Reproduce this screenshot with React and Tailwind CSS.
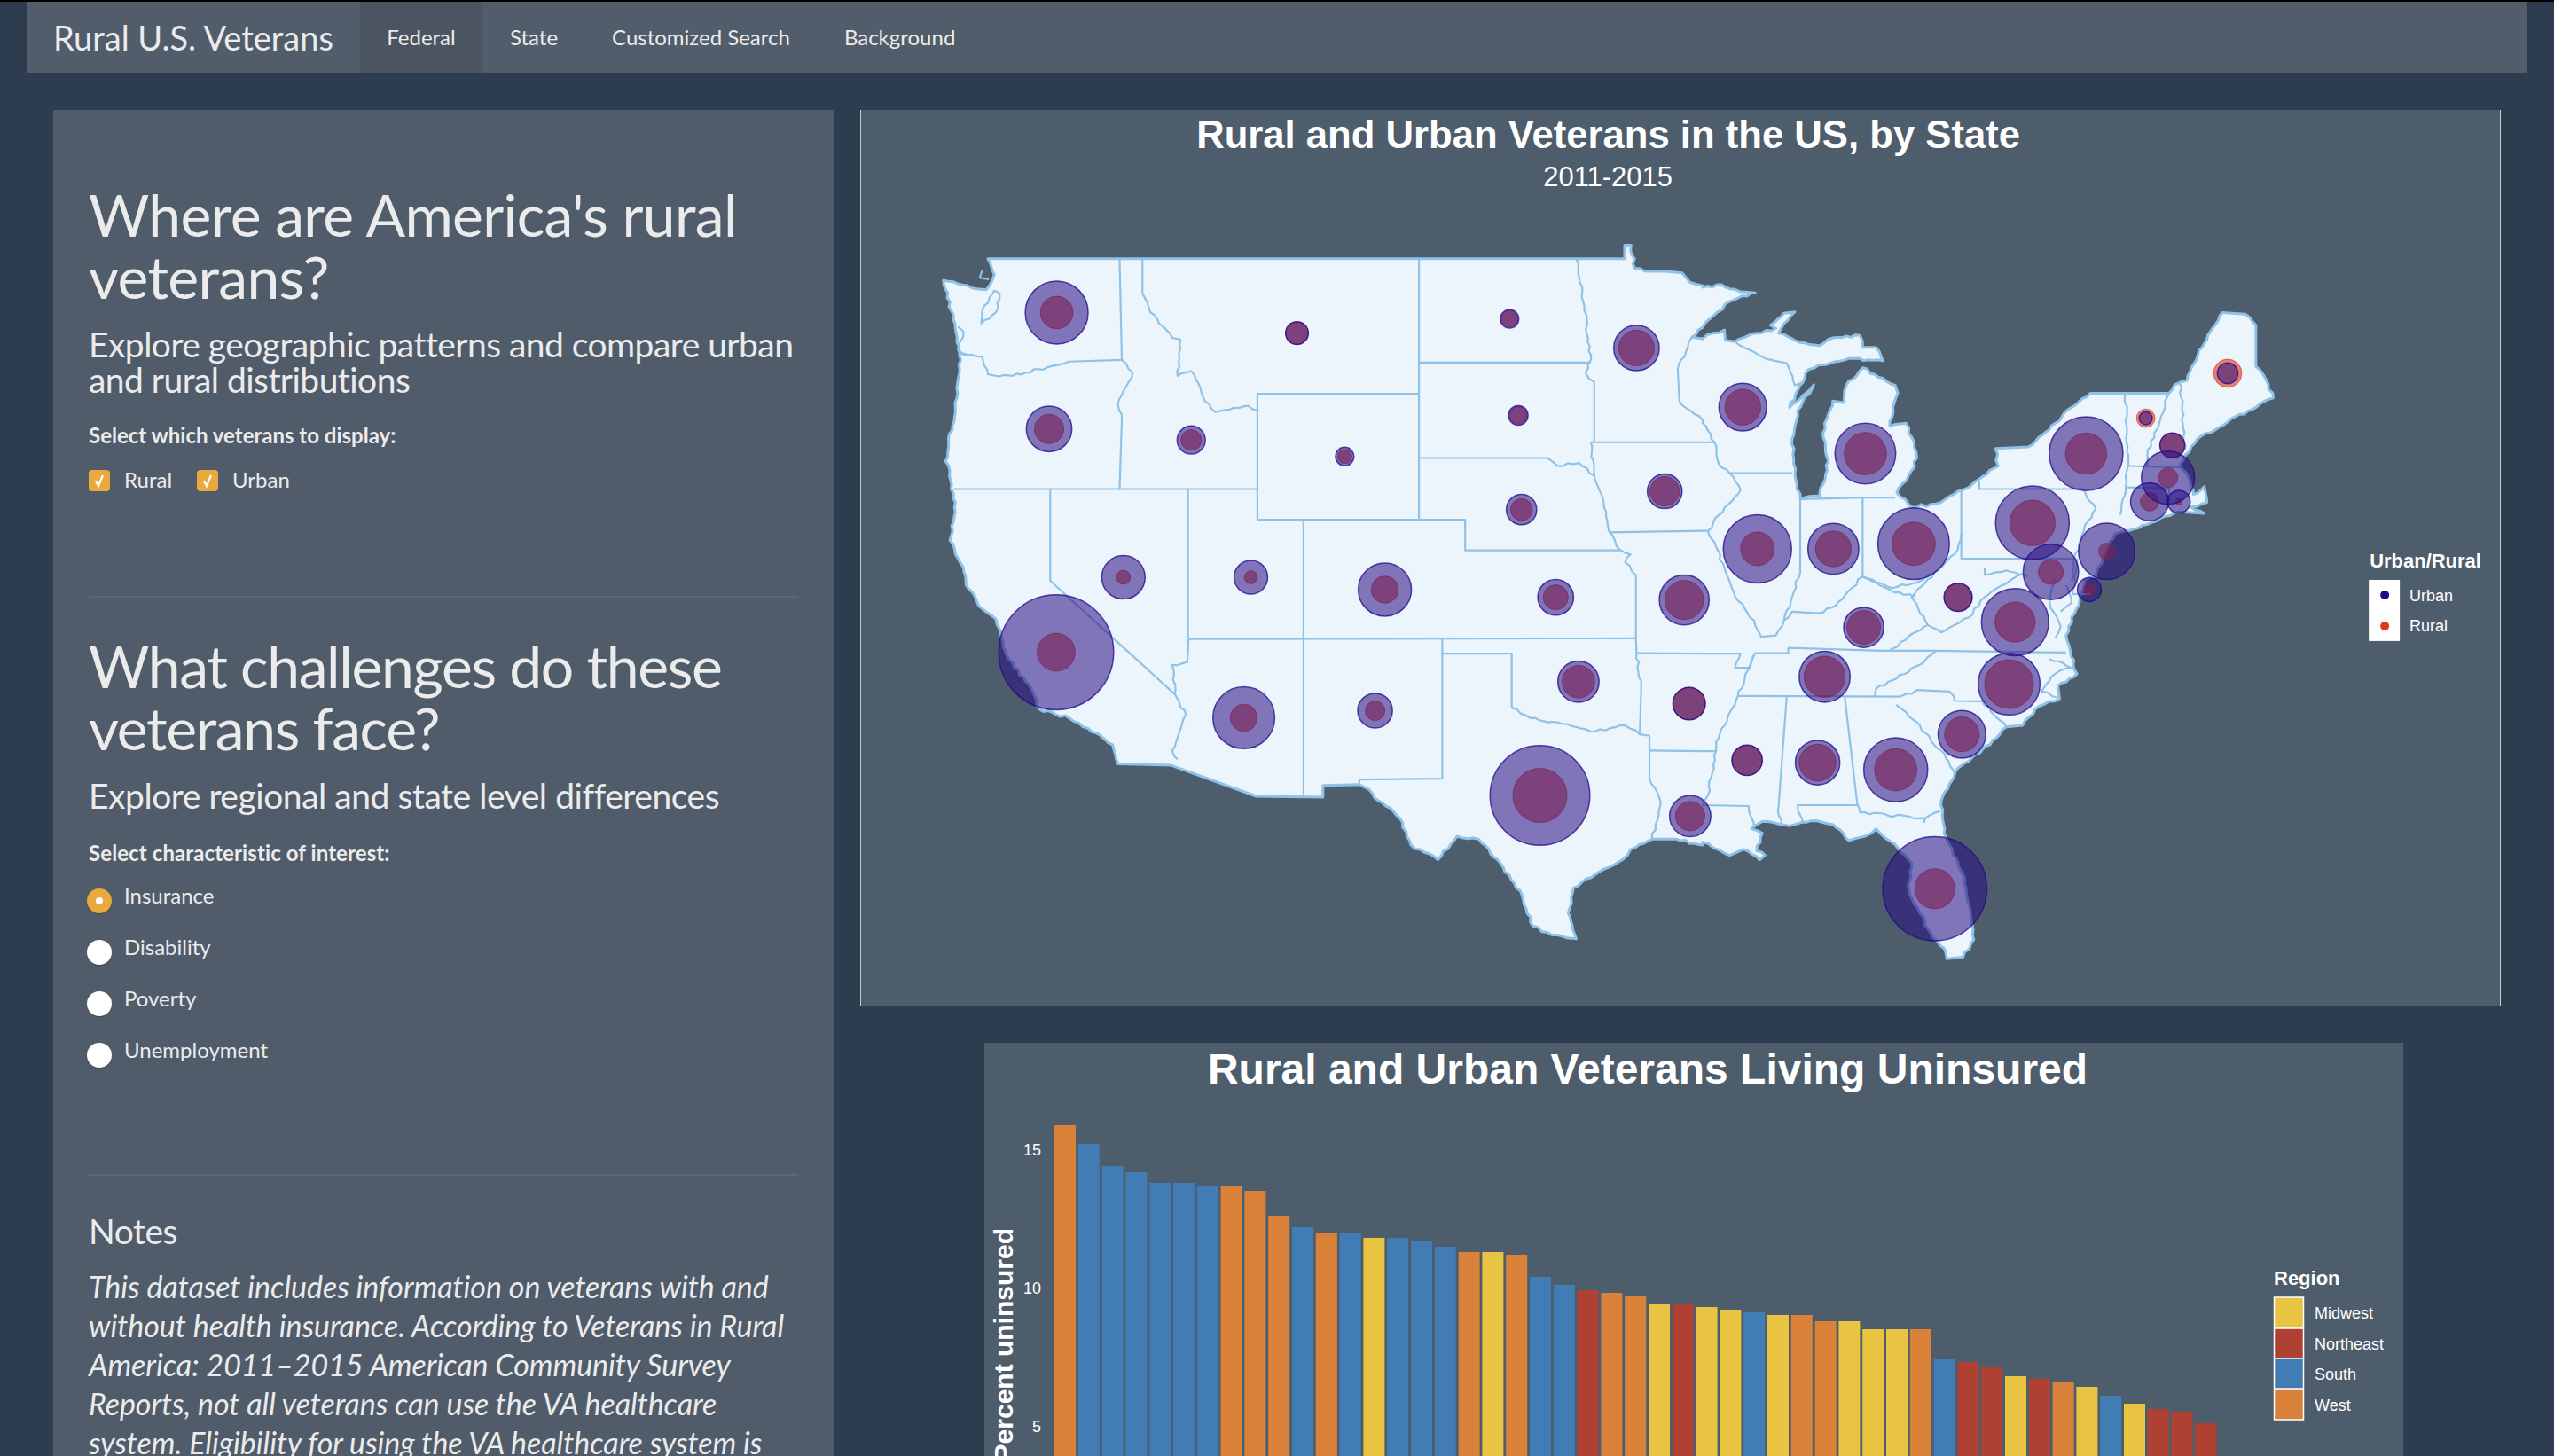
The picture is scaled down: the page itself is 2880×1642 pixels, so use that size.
const a=(...n)=>{const r=[];for(let i=0;i<n.length;i+=2)r.push([960+n[i]/1.6333,120+n[i+1]/2.8]);return r};
const b=(...n)=>{const r=[];for(let i=0;i<n.length;i+=2)r.push([1920+n[i]/1.6333,120+n[i+1]/2.8]);return r};
const c=(...n)=>{const r=[];for(let i=0;i<n.length;i+=2)r.push([960+n[i]/1.6333,640+n[i+1]/3]);return r};
const d=(...n)=>{const r=[];for(let i=0;i<n.length;i+=2)r.push([1920+n[i]/1.6333,640+n[i+1]/3]);return r};
const rnd=s=>{const v=Math.sin(s*12.9898)*43758.5453;return v-Math.floor(v)-.5};
// Roughens curved borders and coasts; keeps survey lines (axis-aligned or long straight ones) straight.
const P=(...segs)=>{
  const pts=segs.flat();const out=[pts[0]];let seed=pts[0][0]+pts[0][1];
  for(let i=1;i<pts.length;i++){
    const [x0,y0]=pts[i-1],[x1,y1]=pts[i];const dx=x1-x0,dy=y1-y0,len=Math.hypot(dx,dy);
    if(len>=8&&len<=90&&Math.abs(dx)>2.5&&Math.abs(dy)>2.5){
      const n=Math.floor(len/5);
      for(let k=1;k<n;k++){const t=k/n;seed+=1.37;const o=rnd(seed)*3.2;out.push([x0+dx*t-dy/len*o,y0+dy*t+dx/len*o])}
    }
    out.push(pts[i]);
  }
  return out.map((p,i)=>(i?'L':'M')+p[0].toFixed(1)+' '+p[1].toFixed(1)).join(' ');
};

const OUTLINE=P(
a(250,480,1424,480,1424,437,1436,437,1443,510,1480,520,1500,520,1530,525,1545,555,1568,565),
b(0,570,35,562,50,575,97,588,50,615,20,660,0,697),
a(1548,728,1568,733),
b(0,733,20,715,40,705,42,738,60,742,100,715,135,700,125,690,150,652,170,648,145,700,140,715,180,745,215,755,240,730,290,722,295,760,320,760,333,803,270,795,215,815,195,830,185,870,160,950,205,878,175,960,165,1050,170,1160,180,1240,215,1230,232,1120,222,1030,240,930,260,935,265,880,295,825,355,880,360,905,345,1010,375,1000,390,1060,395,1110,385,1150,358,1220,385,1265,430,1255,480,1210,545,1135,540,1080,600,1075,650,1000,680,950,715,905,860,905,870,878,893,865,915,770,958,650,1000,655,1020,690,1020,820,1035,850,1052,920,1020,950,975,985,950,1015,920,1040,890,1100,880,1130,895,1170,905,1225,925,1200,930,1250,900,1265,925,1285,880,1280,835,1310,770,1345,760,1350,745,1400,725,1485),
d(705,40,695,110,670,230,678,285,690,360,655,400,658,445,620,470,590,535,560,540,530,600,470,680,440,790,445,900,480,1040,500,1260,480,1320,450,1325,445,1290,425,1255,400,1170,380,1090,385,1000,360,950,320,885,300,910,270,925,240,870,200,858,160,875,145,870,110,860,90,885,110,900,100,960,115,975,105,990,75,955,50,975,20,950,0,930),
c(1568,940,1520,920,1475,920,1435,955,1420,990,1370,1040,1330,1085,1320,1170,1335,1258,1290,1245,1255,1215,1235,1110,1190,990,1155,920,1115,910,1080,990,1030,940,1010,850,945,745,935,735,868,738,868,778,745,775,588,670,490,665,480,600,435,545,400,510,345,480,330,410,285,300,265,175,240,140,210,60,205,0),
a(180,1370,190,1280,180,1150,172,1120,190,950,200,800,190,700,168,548,230,575,247,578,262,530,250,480)
)+' Z';

const LINES=[
P(a(240,515,235,540,252,545)),
P(a(262,580,240,640,238,685,265,650,272,590,262,580)),
P(a(195,695,205,710,195,770,215,785)),
P(a(493,480,497,800)),
P(a(200,780,240,790,250,845,270,852,320,840,400,805,497,800)),
P(a(497,800,517,840,490,940,497,990,493,1207)),
P(a(187,1208,747,1208)),
P(a(535,480,535,590,550,650,590,730,605,735,600,850,625,835,650,930,670,965,730,945,747,960)),
P(a(747,907,747,1305)),
P(a(747,907,1045,907)),
P(a(1045,480,1045,1305)),
P(a(1045,808,1362,808)),
P(a(1335,480,1350,630,1362,800,1352,840,1368,870,1368,1060)),
P(a(1045,1110,1282,1110,1300,1135,1340,1125,1368,1165,1390,1280,1395,1340,1415,1400,1435,1415,1425,1440,1445,1480),c(1445,30,1445,240)),
P(a(1362,1060,1368,1165)),
P(a(1362,1060,1568,1060),b(0,1060,22,1060)),
P(a(1395,1345,1568,1340),b(0,1340,10,1340)),
P(a(747,1305,1130,1305,1130,1402,1415,1402)),
P(a(832,1305),c(832,775)),
P(a(619,1208),c(619,240)),
P(c(620,242,1445,240)),
P(c(1088,242,1088,292,1216,292,1216,475,1250,510,1310,530,1370,555,1425,535,1452,565,1470,570,1470,715,1490,790,1475,920)),
P(c(1088,292,1088,715,935,718,935,735)),
P(c(1445,240,1446,290,1455,400,1452,565)),
P(c(1446,290,1568,292),d(0,292,70,292,60,340,85,340,97,290,158,290,158,272)),
P(c(1470,620,1568,622),d(0,622,25,622)),
P(a(365,1208),c(365,45,595,430,615,500,590,620,600,650)),
P(c(620,242,618,320,590,330,595,430)),
P(d(97,290,65,435,25,590,25,622,10,770,0,805,85,808,95,880)),
P(d(65,435,365,437)),
P(d(155,437,140,810,145,870)),
P(d(262,437,285,800,290,830,410,850,408,865)),
P(d(185,860,175,805,285,805)),
P(d(158,272,330,282,430,282,670,288)),
P(d(430,282,400,330,320,410,317,437)),
P(d(365,437,395,415,455,420,465,452,515,453,560,540)),
P(d(357,465,375,490,440,620,465,700)),
P(d(410,850,438,825)),
P(b(22,1060,30,1130,50,1158,70,1210,30,1290,10,1340,40,1456),d(60,100,95,180,108,235,135,230,150,180,165,150,215,155,245,130,275,70,295,30,345,75,390,100)),
P(d(345,280,415,195,385,100,415,40,440,0),b(470,1400,477,1350)),
P(b(477,1210,477,1428,690,1428)),
P(b(510,1185,510,1208,700,1208,725,1270,710,1310,685,1428,680,1500)),
P(b(780,905,785,1130,780,1200,770,1290)),
P(b(860,905,820,1100,820,1140)),
P(b(880,875,890,1085)),
P(b(785,1135,885,1140)),
P(b(780,1203,860,1205,860,1250)),
P(b(180,1240,295,1235,355,1235)),
P(b(295,1235,295,1486),d(320,50,350,70,395,50,420,20)),
P(b(180,1240,180,1420),d(180,0,165,100,150,180)),
P(b(50,1158,165,1158)),
P(a(1548,730,1522,830,1525,930,1568,990),b(0,1000,22,1060)),
P(b(60,742,110,790,155,810,170,880,185,870)),
P(d(415,195,440,220,490,170,520,100,570,40,590,20)),
P(d(520,0,520,25,560,10,600,30)),
P(b(690,1428,682,1540,715,1540)),
P(d(650,40,640,120,660,200,650,240)),
P(d(670,60,680,120,660,150)),
P(d(640,310,680,340,650,360,625,420,655,440)),
];

// [region, zx, zy, urban half-width, rural half-width] in crop units
const BUBBLES=[
[a,377,650,58,30],[a,363,1018,42,27],[a,625,1053,26,19],[a,820,715,21,21],[a,1212,670,17,15],[a,1228,975,18,16],[a,908,1105,17,13],[a,1446,762,42,33],[a,1498,1215,32,27],[a,1234,1273,28,20],[a,500,1487,40,13],[a,735,1487,31,12],
[c,982,75,49,25],[c,1297,101,33,23],[c,1534,110,46,36],[c,376,287,106,35],[c,722,509,57,25],[c,964,485,32,18],[c,1339,387,38,30],[c,1268,772,92,50],[c,1543,461,30,30],[c,1545,842,38,27],
[b,74,949,44,33],[b,300,1096,56,39],[b,101,1397,63,31],[b,241,1397,47,33],[b,389,1381,66,40],[b,608,1315,68,42],[b,707,1096,68,38],[b,817,984,12,17],[b,968,842,19,26],[b,866,1070,23,23],[b,858,1172,49,18],[b,824,1248,35,17],[b,878,1248,21,6],[b,745,1405,52,15],[b,642,1470,51,23],
[d,713,75,22,11],[d,576,185,62,37],[d,471,101,26,26],[d,297,203,37,31],[d,225,370,47,38],[d,565,395,57,45],[d,478,565,44,32],[d,356,685,59,39],[d,212,661,41,34],[d,82,653,28,28],[d,428,1088,96,37],
].map(([f,x,y,u,r])=>{const [p]=f(x,y);return {x:p[0],y:p[1],u:u/1.6333,r:r/1.6333}});

const O='#da8239',B='#417db4',Y='#e9c443',R='#ae4132';
const BARS=[[327,O],[390,B],[465,B],[486,B],[522,B],[522,B],[531,B],[531,O],[549,O],[633,O],[672,B],[690,O],[690,B],[708,Y],[708,B],[717,B],[738,B],[756,O],[756,Y],[765,O],[840,B],[867,B],[885,R],[894,O],[906,O],[933,Y],[933,R],[942,Y],[951,Y],[960,B],[969,Y],[969,O],[990,O],[990,Y],[1017,Y],[1017,Y],[1017,O],[1119,B],[1128,R],[1146,R],[1176,Y],[1185,R],[1194,O],[1212,Y],[1242,B],[1269,Y],[1287,R],[1296,R],[1335,R]];
const LEG=[['Midwest',Y,1463],['Northeast',R,1498],['South',B,1532],['West',O,1567]];

function MapPanel(){
  return (
    <div className="h-[1010px] bg-[#4e5d6c] border-x border-[#c3cbd2]">
      <svg viewBox="970 124 1850 1010" className="block w-full h-full font-['Liberation_Sans',Arial,sans-serif]">
        <text x="1813.5" y="167" textAnchor="middle" fill="#fff" fontSize="43.7" fontWeight="700">Rural and Urban Veterans in the US, by State</text>
        <text x="1813" y="210" textAnchor="middle" fill="#fff" fontSize="31">2011-2015</text>
        <path d={OUTLINE} fill="#edf5fc" stroke="#8fc2e6" strokeWidth="3" strokeLinejoin="round"/>
        {LINES.map((l,i)=><path key={i} d={l} fill="none" stroke="#8fc2e6" strokeWidth="2.2" strokeLinejoin="round"/>)}
        {BUBBLES.map((o,i)=><circle key={i} cx={o.x} cy={o.y} r={o.r} fill="#e0381e" fillOpacity=".62" stroke="#e0381e" strokeOpacity=".7" strokeWidth="1"/>)}
        {BUBBLES.map((o,i)=><circle key={i} cx={o.x} cy={o.y} r={o.u} fill="#2b1082" fillOpacity=".56" stroke="#20088a" strokeOpacity=".75" strokeWidth="1.5"/>)}
        <text x="2673" y="640" fill="#fff" fontSize="22" fontWeight="700">Urban/Rural</text>
        <rect x="2672" y="654" width="35" height="69" fill="#fff"/>
        <circle cx="2690" cy="671" r="5" fill="#20088a"/>
        <circle cx="2690" cy="706" r="5" fill="#e0381e"/>
        <text x="2718" y="678" fill="#fff" fontSize="18">Urban</text>
        <text x="2718" y="712" fill="#fff" fontSize="18">Rural</text>
      </svg>
    </div>
  );
}

function ChartPanel(){
  return (
    <div className="ml-[140px] mr-[110px] mt-[42px] h-[600px] bg-[#4e5d6c]">
      <svg viewBox="1110 1176 1600 600" className="block w-full h-full font-['Liberation_Sans',Arial,sans-serif]">
        <text x="1858" y="1222" textAnchor="middle" fill="#fff" fontSize="48" fontWeight="700">Rural and Urban Veterans Living Uninsured</text>
        {BARS.map(([t,col],i)=>{const top=1160+t/3;return <rect key={i} x={1189+i*26.8} y={top} width="24" height={1765-top} fill={col}/>})}
        <text x="1174" y="1303" textAnchor="end" fill="#fff" fontSize="18">15</text>
        <text x="1174" y="1459" textAnchor="end" fill="#fff" fontSize="18">10</text>
        <text x="1174" y="1615" textAnchor="end" fill="#fff" fontSize="18">5</text>
        <text transform="translate(1142 1385) rotate(-90)" textAnchor="end" fill="#fff" fontSize="30" fontWeight="700">Percent uninsured</text>
        <text x="2564" y="1449" fill="#fff" fontSize="22" fontWeight="700">Region</text>
        {LEG.map(([n,col,y])=>(
          <g key={n}>
            <rect x="2564.5" y={y} width="33" height="34" fill={col} stroke="#fff" strokeWidth="1.5"/>
            <text x="2610" y={y+24} fill="#fff" fontSize="18">{n}</text>
          </g>
        ))}
      </svg>
    </div>
  );
}

function Check({label}){
  return (
    <label className="flex items-center gap-[16px]">
      <span className="flex items-center justify-center w-6 h-6 rounded-[4px] bg-[#e9a93f]">
        <svg viewBox="0 0 24 24" className="w-6 h-6"><path d="M8 12.5 L11 18 L16 6" fill="none" stroke="#fff" strokeWidth="2.2"/></svg>
      </span>
      <span className="text-[24px] leading-[30px] -mt-[2px]">{label}</span>
    </label>
  );
}

function Radio({label,on}){
  return (
    <div className="flex h-[58px] items-start gap-[14px] -ml-[2px]">
      <span className={"mt-[5px] shrink-0 flex items-center justify-center w-[28px] h-[28px] rounded-full shadow-[0_1px_1px_rgba(0,0,0,.25)] "+(on?"bg-[#e9a93f]":"bg-white")}>
        {on && <span className="block w-2 h-2 rounded-full bg-white"/>}
      </span>
      <span className="text-[24px] leading-[26px]">{label}</span>
    </div>
  );
}

export default function App(){
  return (
    <div className="h-[1642px] overflow-hidden flex flex-col bg-[#2d3c4e] border-t-2 border-black font-['Lato',sans-serif] text-[#ebebeb]">
      <nav className="mx-[30px] h-[80px] shrink-0 flex items-stretch bg-[#525d6b]">
        <div className="w-[376px] pl-[30px] pt-[1px] flex items-center text-[38px] whitespace-nowrap">Rural U.S. Veterans</div>
        <div className="w-[138px] flex items-center justify-center bg-[#4a5561] text-[24px]">Federal</div>
        <div className="pl-[31px] pr-[32px] flex items-center text-[24px]">State</div>
        <div className="px-[29px] flex items-center text-[24px]">Customized Search</div>
        <div className="pl-[32px] pr-[31px] flex items-center text-[24px]">Background</div>
      </nav>
      <main className="flex-1 min-h-0 flex gap-[30px] px-[60px] pt-[42px]">
        <aside className="w-[880px] shrink-0 bg-[#515c6b] px-[40px] pt-[83px] overflow-hidden">
          <h1 className="text-[66px] leading-[70px] tracking-[-0.66px]">Where are America's rural veterans?</h1>
          <h3 className="mt-[21px] text-[39px] leading-[40px] tracking-[-0.54px]">Explore geographic patterns and compare urban and rural distributions</h3>
          <p className="mt-[26px] text-[24px] leading-[34px] font-bold">Select which veterans to display:</p>
          <div className="mt-[20px] flex gap-[28px]"><Check label="Rural"/><Check label="Urban"/></div>
          <hr className="mt-[116px] border-0 h-[2px] bg-[#5c6775]"/>
          <h1 className="mt-[42px] text-[66px] leading-[70px] tracking-[-1.35px]">What challenges do these veterans face?</h1>
          <h3 className="mt-[21px] text-[39px] leading-[40px] tracking-[-0.46px]">Explore regional and state level differences</h3>
          <p className="mt-[28px] text-[24px] leading-[34px] font-bold tracking-[0.1px]">Select characteristic of interest:</p>
          <div className="mt-[18px]">
            <Radio label="Insurance" on/>
            <Radio label="Disability"/>
            <Radio label="Poverty"/>
            <Radio label="Unemployment"/>
          </div>
          <hr className="mt-[95px] border-0 h-[2px] bg-[#5c6775]"/>
          <h3 className="mt-[40px] text-[39px] leading-[44px] tracking-[-0.46px]">Notes</h3>
          <p className="mt-[19px] text-[34px] leading-[44px] italic tracking-[-0.05px]">This dataset includes information on veterans with and without health insurance. According to Veterans in Rural America: 2011–2015 American Community Survey Reports, not all veterans can use the VA healthcare system. Eligibility for using the VA healthcare system is</p>
        </aside>
        <section className="flex-1 min-w-0">
          <MapPanel/>
          <ChartPanel/>
        </section>
      </main>
    </div>
  );
}
